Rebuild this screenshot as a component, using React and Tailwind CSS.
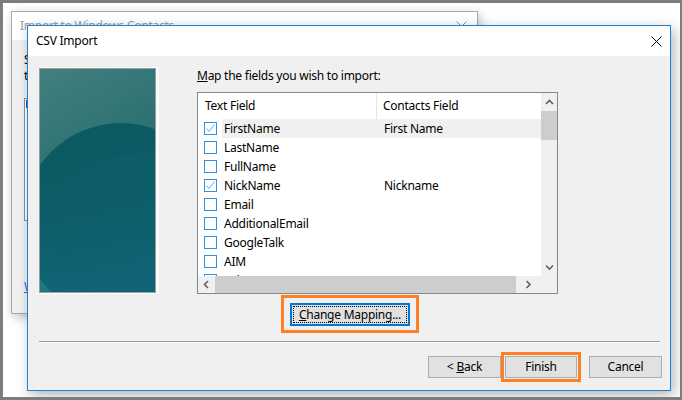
import React from 'react';

const rows = [
  { name: 'FirstName', checked: true, field: 'First Name', selected: true },
  { name: 'LastName' },
  { name: 'FullName' },
  { name: 'NickName', checked: true, field: 'Nickname' },
  { name: 'Email' },
  { name: 'AdditionalEmail' },
  { name: 'GoogleTalk' },
  { name: 'AIM' },
  { name: 'Yahoo' },
];

const CloseX = ({ color = '#000' }) => (
  <svg width="11" height="11" viewBox="0 0 11 11">
    <path d="M0.5 0.5 L10.5 10.5 M10.5 0.5 L0.5 10.5" stroke={color} strokeWidth="1" />
  </svg>
);

const Checkbox = ({ checked }) => (
  <div className="w-[13px] h-[13px] border border-[#3390dd] bg-white shrink-0 flex items-center justify-center">
    {checked && (
      <svg width="11" height="11" viewBox="0 0 11 11">
        <path d="M1.5 5.5 L4 8.5 L9.5 1.5" fill="none" stroke="#5fa9e6" strokeWidth="1" />
      </svg>
    )}
  </div>
);

const Chevron = ({ dir }) => {
  const d = {
    up: 'M1 5 L4.5 1.5 L8 5',
    down: 'M1 1.5 L4.5 5 L8 1.5',
    left: 'M5 1 L1.5 4.5 L5 8',
    right: 'M1.5 1 L5 4.5 L1.5 8',
  }[dir];
  const horiz = dir === 'left' || dir === 'right';
  return (
    <svg width={horiz ? 7 : 9} height={horiz ? 9 : 7} viewBox={horiz ? '0 0 7 9' : '0 0 9 7'}>
      <path d={d} fill="none" stroke="#606060" strokeWidth="1.6" />
    </svg>
  );
};

const SideImage = () => (
  <div className="w-[120px] h-[227px] shrink-0 border-t border-b border-white border-r-[3px] border-r-[#fafafa]">
    <div className="w-full h-full border border-[#8ea2a2]">
      <svg width="100%" height="100%" viewBox="0 0 115 223" preserveAspectRatio="none">
        <defs>
          <linearGradient id="bgTeal" x1="0" y1="0" x2="0.3" y2="1">
            <stop offset="0" stopColor="#437f7f" />
            <stop offset="0.45" stopColor="#2f7272" />
            <stop offset="1" stopColor="#1c7a7c" />
          </linearGradient>
          <linearGradient id="circTeal" x1="0" y1="0" x2="0.2" y2="1">
            <stop offset="0" stopColor="#0b585f" />
            <stop offset="0.6" stopColor="#0d5f6b" />
            <stop offset="1" stopColor="#12687e" />
          </linearGradient>
        </defs>
        <rect width="115" height="223" fill="url(#bgTeal)" />
        <circle cx="81" cy="153" r="99" fill="url(#circTeal)" />
        <circle cx="95" cy="165" r="80" fill="#0e6070" opacity="0.25" />
      </svg>
    </div>
  </div>
);

const BackWindow = () => (
  <div className="absolute left-[11px] top-[11px] w-[467px] h-[303px] border border-[#a9a9a9] bg-[#f0f0f0] shadow-[2px_3px_10px_rgba(0,0,0,0.25)] flex flex-col">
    <div className="h-[28px] bg-white flex items-center justify-between pl-[8px] pr-[10px] shrink-0">
      <span className="text-[12px] text-[#9a9a9a]">Import to Windows Contacts</span>
      <CloseX color="#8a8a8a" />
    </div>
    <div className="relative flex-1 pl-[12px] pt-[12px]">
      <div className="text-[12px] leading-[16px] text-black">Select the file type</div>
      <div className="text-[12px] leading-[16px] text-black">to import</div>
      <div className="mt-[14px] w-[200px] h-[123px] border border-[#8f8f8f] bg-white">
        <div className="ml-[1px] mt-[1px] w-[2px] h-[8px] bg-[#0a64c8]" />
      </div>
      <div className="mt-[57px] text-[12px] text-[#2a6ad0] underline">Windows Contacts</div>
    </div>
  </div>
);

const ListView = () => (
  <div className="w-[361px] h-[202px] border border-[#828790] bg-white grid grid-cols-[1fr_16px] grid-rows-[1fr_17px] overflow-hidden">
    <div className="overflow-hidden">
      <div className="flex h-[26px] items-center">
        <div className="w-[179px] h-full border-r border-[#e5e5e5] pl-[7px] flex items-center">Text Field</div>
        <div className="pl-[6px]">Contacts Field</div>
      </div>
      {rows.map((r) => (
        <div key={r.name} className="flex h-[19px] items-center">
          <div className="w-[24px] pl-[6px] flex items-center">
            <Checkbox checked={r.checked} />
          </div>
          <div className={`flex flex-1 h-full items-center ${r.selected ? 'bg-[#f0f0f0]' : ''}`}>
            <div className="w-[160px] pl-[2px]">{r.name}</div>
            <div className="pl-[2px]">{r.field || ''}</div>
          </div>
        </div>
      ))}
    </div>
    <div className="bg-[#f0f0f0] flex flex-col items-center">
      <div className="h-[18px] flex items-center justify-center"><Chevron dir="up" /></div>
      <div className="w-full h-[29px] bg-[#cdcdcd]" />
      <div className="flex-1" />
      <div className="h-[17px] flex items-center justify-center"><Chevron dir="down" /></div>
    </div>
    <div className="bg-[#f0f0f0] flex items-center">
      <div className="w-[17px] flex justify-center"><Chevron dir="left" /></div>
      <div className="flex-1 h-full bg-[#cdcdcd]" />
      <div className="w-[25px] flex justify-center"><Chevron dir="right" /></div>
    </div>
    <div className="bg-[#f0f0f0]" />
  </div>
);

const Button = ({ children, className = '' }) => (
  <div className={`h-[22px] bg-[#e1e1e1] border border-[#adadad] flex items-center justify-center ${className}`}>
    {children}
  </div>
);

const App = () => {
  return (
    <div
      className="relative w-[682px] h-[400px] overflow-hidden bg-white border-t-[3px] border-l-[3px] border-b-[3px] border-r-[2px] border-[#7d7d7d] text-[12px] tracking-[-0.25px] text-black"
      style={{ fontFamily: '"Noto Sans", "Open Sans", sans-serif' }}
    >
      <div className="relative w-full h-full -ml-[3px] -mt-[3px]">
        <BackWindow />

        <div className="absolute left-[27px] top-[25px] w-[644px] h-[366px] border border-[#1883d7] bg-[#f0f0f0] shadow-[3px_4px_12px_rgba(0,0,0,0.3)] flex flex-col">
          <div className="h-[30px] bg-white flex items-center justify-between pl-[8px] pr-[8px] shrink-0">
            <span className="text-[12px]">CSV Import</span>
            <CloseX />
          </div>

          <div className="flex pl-[11px] pt-[11px]">
            <SideImage />
            <div className="ml-[38px] flex flex-col">
              <div className="h-[16px] leading-[16px] mt-[1px]">
                <span className="underline">M</span>ap the fields you wish to import:
              </div>
              <div className="mt-[8px]">
                <ListView />
              </div>
              <div className="ml-[84px] mt-[1px] w-[138px] h-[38px] border-[3px] border-[#ff7f27] pt-[5px] pl-[6px]">
                <div className="w-[120px] h-[23px] bg-[#e1e1e1] border-2 border-[#0078d7] p-[1px]">
                  <div className="w-full h-full border border-dotted border-black flex items-center justify-center">
                    <span><span className="underline">C</span>hange Mapping...</span>
                  </div>
                </div>
              </div>
            </div>
          </div>

          <div className="ml-[11px] mr-[10px] mt-[8px] h-[1px] bg-[#a0a0a0] border-b border-white box-content" />

          <div className="flex items-center justify-end pr-[8px] mt-[9px]">
            <Button className="w-[73px]">&lt; <span className="underline ml-[3px]">B</span>ack</Button>
            <div className="w-[80px] h-[30px] border-[3px] border-[#ff7f27] flex items-center justify-center">
              <Button className="w-[72px]">Finish</Button>
            </div>
            <Button className="w-[73px] ml-[8px]">Cancel</Button>
          </div>
        </div>
      </div>
    </div>
  );
};

export default App;
